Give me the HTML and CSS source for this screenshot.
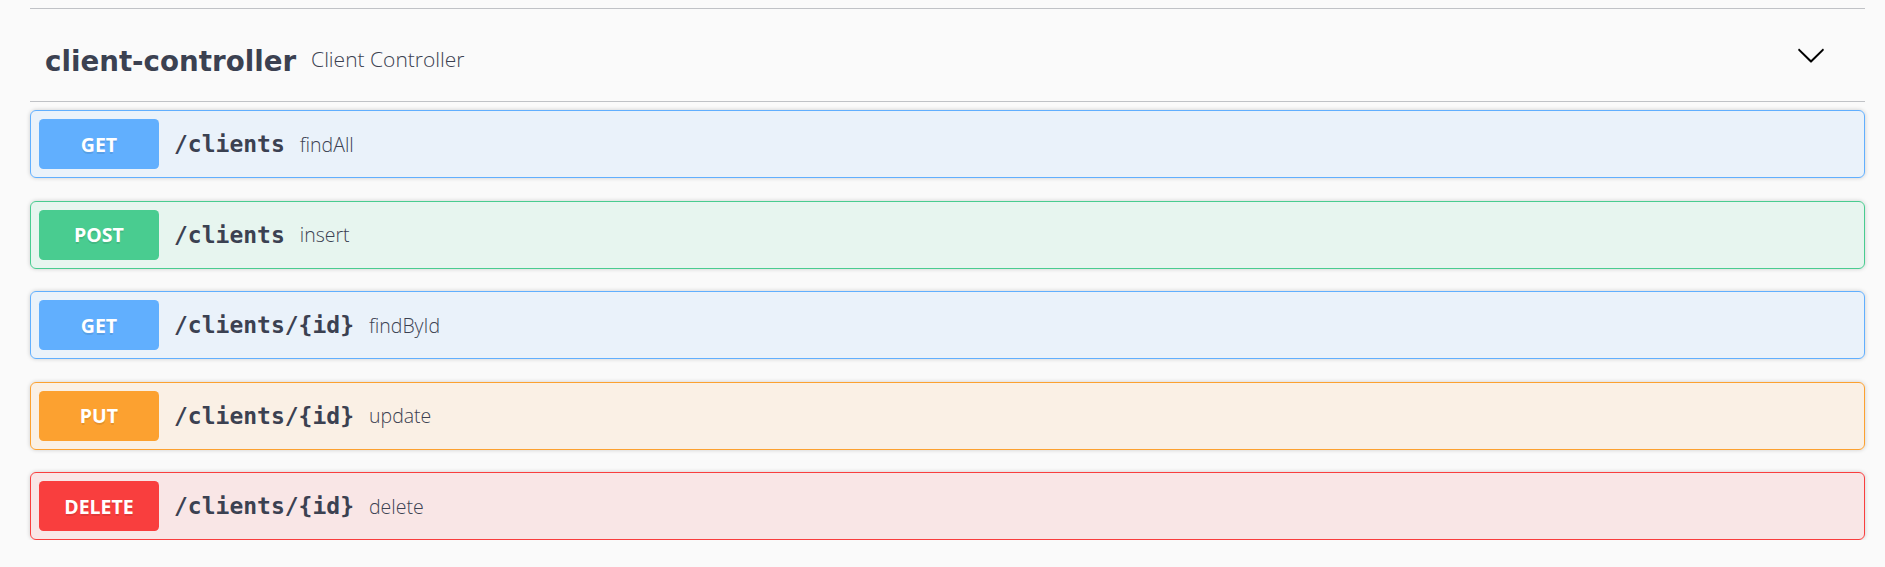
FILE: index.html
```html
<!DOCTYPE html>
<html lang="en">
<head>
<meta charset="utf-8">
<title>client-controller</title>
<link rel="stylesheet" href="styles.css">
</head>
<body>
<div class="wrapper">
  <div class="prev-section"></div>
  <div class="tag-header">
    <h3 class="tag-title">client-controller</h3>
    <small class="tag-desc">Client Controller</small>
    <svg class="arrow" width="30" height="30" viewBox="0 0 20 20" aria-hidden="true">
      <path d="M17.418 6.109c.272-.268.709-.268.979 0s.271.701 0 .969l-7.908 7.83c-.27.268-.707.268-.979 0l-7.908-7.830c-.27-.268-.27-.701 0-.969.271-.268.709-.268.979 0L10 13.25l7.418-7.141z"/>
    </svg>
  </div>
  <div class="ops">
    <div class="op op-get">
      <span class="method">GET</span>
      <span class="path">/clients</span>
      <span class="desc">findAll</span>
    </div>
    <div class="op op-post">
      <span class="method">POST</span>
      <span class="path">/clients</span>
      <span class="desc">insert</span>
    </div>
    <div class="op op-get">
      <span class="method">GET</span>
      <span class="path">/clients/{id}</span>
      <span class="desc">findById</span>
    </div>
    <div class="op op-put">
      <span class="method">PUT</span>
      <span class="path">/clients/{id}</span>
      <span class="desc">update</span>
    </div>
    <div class="op op-delete">
      <span class="method">DELETE</span>
      <span class="path">/clients/{id}</span>
      <span class="desc">delete</span>
    </div>
  </div>
</div>
</body>
</html>
```
FILE: styles.css
```css
html, body {
  margin: 0;
  padding: 0;
  background: #fafafa;
}

.wrapper {
  padding: 0 20px 0 30px;
  color: #3b4151;
}

.prev-section {
  height: 8px;
  border-bottom: 1px solid rgba(59, 65, 81, 0.3);
}

.tag-header {
  display: flex;
  align-items: center;
  height: 92px;
  padding: 0 39px 0 15px;
  border-bottom: 1px solid rgba(59, 65, 81, 0.3);
  margin-bottom: 8px;
}

.tag-title {
  margin: 0;
  padding-top: 12px;
  font-family: "DejaVu Sans", sans-serif;
  font-weight: 700;
  font-size: 27.7px;
  color: #3b4151;
  white-space: nowrap;
}

.tag-desc {
  flex: 1;
  padding: 8px 15px 0;
  font-family: "Open Sans", sans-serif;
  font-size: 21px;
  font-weight: 300;
  color: #3b4151;
}

.arrow {
  display: block;
  fill: #000;
}

.ops {
  display: flex;
  flex-direction: column;
  gap: 22.5px;
}

.op {
  display: flex;
  align-items: center;
  padding: 8px;
  border: 1px solid;
  border-radius: 6px;
  box-shadow: 0 0 4.5px rgba(0, 0, 0, 0.19);
}

.method {
  display: flex;
  align-items: center;
  justify-content: center;
  width: 120px;
  height: 50px;
  border-radius: 4.5px;
  font-family: "Open Sans", sans-serif;
  font-weight: 700;
  font-size: 19.5px;
  color: #fff;
  text-shadow: 0 1.5px 0 rgba(0, 0, 0, 0.1);
}

.path {
  padding: 0 15px;
  font-family: "DejaVu Sans Mono", monospace;
  font-weight: 700;
  font-size: 23px;
  color: #3b4151;
}

.desc {
  font-family: "Open Sans", sans-serif;
  font-size: 19.5px;
  font-weight: 300;
  color: #3b4151;
}

.op-get { background: rgba(97, 175, 254, 0.1); border-color: #61affe; }
.op-get .method { background: #61affe; }

.op-post { background: rgba(73, 204, 144, 0.1); border-color: #49cc90; }
.op-post .method { background: #49cc90; }

.op-put { background: rgba(252, 161, 48, 0.1); border-color: #fca130; }
.op-put .method { background: #fca130; }

.op-delete { background: rgba(249, 62, 62, 0.1); border-color: #f93e3e; }
.op-delete .method { background: #f93e3e; }
```
